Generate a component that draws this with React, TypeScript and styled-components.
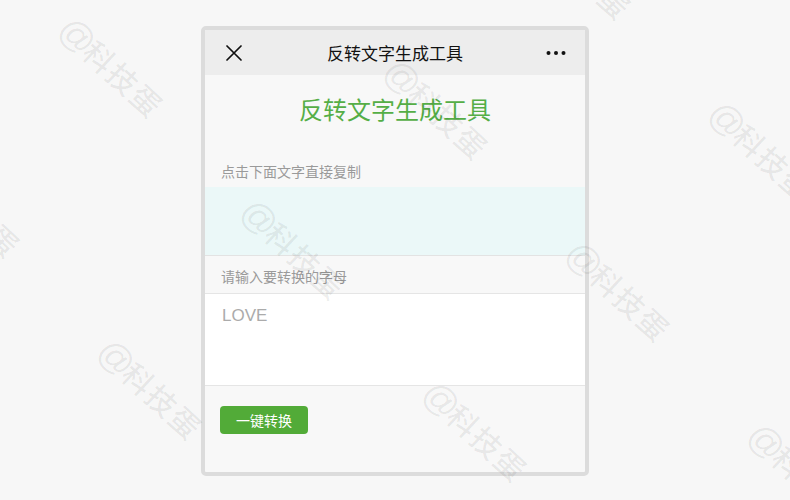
import styled, { createGlobalStyle } from 'styled-components';

const GlobalStyle = createGlobalStyle`
  html, body {
    margin: 0;
    padding: 0;
    background: #f7f7f7;
  }
  body {
    font-family: "Noto Sans CJK SC", "Noto Sans", sans-serif;
  }
`;

const Page = styled.div`
  position: relative;
  width: 790px;
  height: 500px;
  overflow: hidden;
  padding: 26px 0 0 201px;
  box-sizing: border-box;
`;

const Phone = styled.div`
  width: 380px;
  height: 442px;
  border: 4px solid #dcdcdc;
  border-radius: 5px;
  background: #f8f8f8;
  display: flex;
  flex-direction: column;
  overflow: hidden;
`;

const NavBar = styled.div`
  height: 45px;
  flex-shrink: 0;
  background: #ededed;
  display: grid;
  grid-template-columns: 60px 1fr 60px;
  align-items: center;
  padding: 0 19px 0 21px;
  box-sizing: border-box;
`;

const NavTitle = styled.div`
  text-align: center;
  font-size: 17px;
  color: #111;
  font-weight: 400;
  margin-left: -2px;
`;

const NavIcon = styled.div<{ $align: 'left' | 'right' }>`
  display: flex;
  justify-content: ${(p) => (p.$align === 'left' ? 'flex-start' : 'flex-end')};
  align-items: center;
`;

const Heading = styled.h1`
  margin: 0;
  padding-top: 20px;
  text-align: center;
  font-size: 24px;
  line-height: 28px;
  font-weight: 400;
  color: #55ae46;
`;

const Label = styled.div<{ $top: number; $bottom: number }>`
  padding: ${(p) => p.$top}px 16px ${(p) => p.$bottom}px;
  font-size: 14px;
  line-height: 20px;
  color: #9a9a9a;
`;

const ResultBox = styled.div`
  height: 68px;
  background: #ebf8f8;
  border-bottom: 1px solid #e3e3e3;
  flex-shrink: 0;
`;

const InputArea = styled.textarea`
  display: block;
  flex-shrink: 0;
  margin: 0;
  padding: 10px 17px;
  box-sizing: border-box;
  border: none;
  border-top: 1px solid #e5e5e5;
  border-bottom: 1px solid #e5e5e5;
  background: #fff;
  resize: none;
  outline: none;
  font-family: "Liberation Sans", Arial, sans-serif;
  font-size: 17px;
  line-height: 24px;
  color: #333;
  height: 93px;
  &::placeholder {
    color: #ababab;
  }
`;

const Actions = styled.div`
  padding: 20px 15px;
`;

const PrimaryButton = styled.button`
  width: 88px;
  height: 28px;
  border: none;
  border-radius: 4px;
  background: #52ab38;
  color: #fff;
  font-family: "Noto Sans CJK SC", sans-serif;
  font-size: 14px;
  padding: 0;
  cursor: pointer;
`;

const Watermark = styled.span`
  position: absolute;
  transform: translate(-50%, -50%) rotate(43deg);
  white-space: nowrap;
  font-family: "Noto Sans CJK SC", sans-serif;
  font-size: 30px;
  font-weight: 500;
  letter-spacing: 2px;
  color: rgba(0, 0, 0, 0.07);
  pointer-events: none;
  user-select: none;
  z-index: 2;
`;

const At = styled.span`
  font-family: "Liberation Sans", Arial, sans-serif;
  font-size: 36px;
  font-weight: 400;
  letter-spacing: -3px;
`;

const CloseIcon = () => (
  <svg width="16" height="16" viewBox="0 0 16 16">
    <path d="M1 1 L15 15 M15 1 L1 15" stroke="#111" strokeWidth="1.7" strokeLinecap="round" />
  </svg>
);

const MoreIcon = () => (
  <svg width="20" height="6" viewBox="0 0 20 6">
    <circle cx="2.5" cy="3" r="2" fill="#111" />
    <circle cx="10" cy="3" r="2" fill="#111" />
    <circle cx="17.5" cy="3" r="2" fill="#111" />
  </svg>
);

// watermark lattice: origin + i*(182,182) + j*(325,42)
const marks: { x: number; y: number }[] = [];
for (let i = -3; i <= 4; i++) {
  for (let j = -3; j <= 4; j++) {
    const x = 112 + 182 * i + 325 * j;
    const y = 67 + 182 * i + 42 * j;
    if (x > -90 && x < 880 && y > -70 && y < 560) marks.push({ x, y });
  }
}

export default function App() {
  return (
    <>
      <GlobalStyle />
      <Page>
        <Phone>
          <NavBar>
            <NavIcon $align="left">
              <CloseIcon />
            </NavIcon>
            <NavTitle>反转文字生成工具</NavTitle>
            <NavIcon $align="right">
              <MoreIcon />
            </NavIcon>
          </NavBar>
          <Heading>反转文字生成工具</Heading>
          <Label $top={38} $bottom={6}>点击下面文字直接复制</Label>
          <ResultBox />
          <Label $top={10} $bottom={7}>请输入要转换的字母</Label>
          <InputArea placeholder="LOVE" />
          <Actions>
            <PrimaryButton>一键转换</PrimaryButton>
          </Actions>
        </Phone>
        {marks.map((m) => (
          <Watermark key={`${m.x}-${m.y}`} style={{ left: m.x, top: m.y }}>
            <At>@</At>科技蛋
          </Watermark>
        ))}
      </Page>
    </>
  );
}
